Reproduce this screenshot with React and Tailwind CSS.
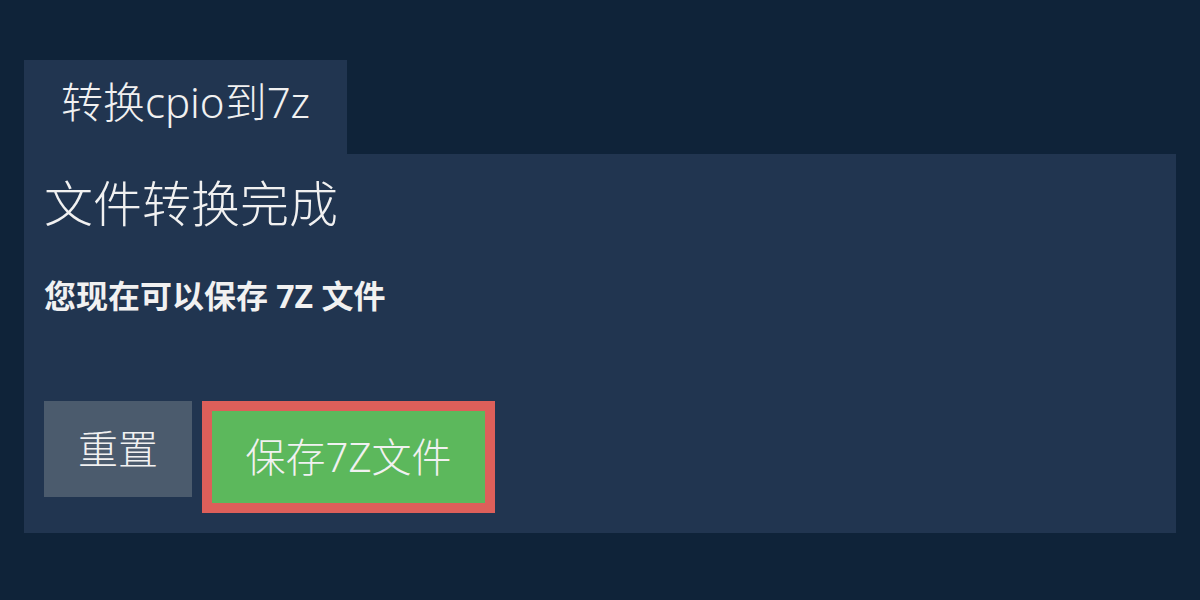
import React from "react";

const font = { fontFamily: '"Noto Sans", "Noto Sans CJK SC", sans-serif' };

const App = () => {
    return (
        <div className="w-[1200px] h-[600px] bg-[#0f2339] pt-[60px] px-[24px] text-[#f1f1f1]" style={font}>
            {/* Tab */}
            <div className="flex">
                <div className="w-[323px] h-[94px] pb-[10px] bg-[#213550] flex items-center justify-center text-[42px] leading-none font-light">
                    转换cpio到7z
                </div>
            </div>

            {/* Panel */}
            <div className="bg-[#213550] h-[379px] px-[20px] pt-[20px]">
                <h2 className="text-[49px] leading-[1.2] font-light">文件转换完成</h2>
                <p className="mt-[39px] text-[32px] leading-[1.5] font-bold">您现在可以保存 7Z 文件</p>

                <div className="mt-[81px] flex items-start gap-[10px]">
                    <button className="w-[148px] h-[96px] bg-[#4b5b6d] text-[40px] font-light flex items-center justify-center">
                        重置
                    </button>
                    <button className="w-[293px] h-[112px] border-[10px] border-[#dd5f5a] bg-[#5cb85c] text-[40px] font-light flex items-center justify-center">
                        保存7Z文件
                    </button>
                </div>
            </div>
        </div>
    );
};

export default App;
